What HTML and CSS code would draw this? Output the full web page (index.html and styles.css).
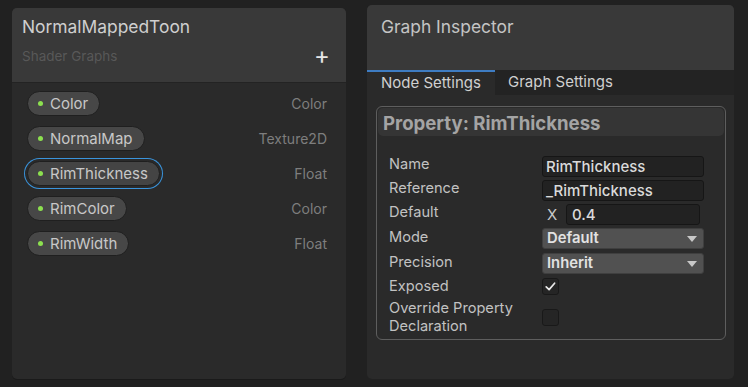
FILE: index.html
```html
<!DOCTYPE html>
<html>
<head>
<meta charset="utf-8">
<link rel="stylesheet" href="styles.css">
</head>
<body>
<div class="stage">
  <section class="blackboard">
    <header class="bb-header">
      <div class="bb-title">NormalMappedToon</div>
      <div class="bb-sub">
        <span>Shader Graphs</span>
        <span class="plus">+</span>
      </div>
    </header>
    <ul class="props">
      <li class="prop"><span class="pill"><i class="dot"></i>Color</span><span class="type">Color</span></li>
      <li class="prop"><span class="pill"><i class="dot"></i>NormalMap</span><span class="type">Texture2D</span></li>
      <li class="prop"><span class="pill selected"><i class="dot"></i>RimThickness</span><span class="type">Float</span></li>
      <li class="prop"><span class="pill"><i class="dot"></i>RimColor</span><span class="type">Color</span></li>
      <li class="prop"><span class="pill"><i class="dot"></i>RimWidth</span><span class="type">Float</span></li>
    </ul>
  </section>

  <section class="inspector">
    <header class="in-header">Graph Inspector</header>
    <nav class="tabs">
      <span class="tab active">Node Settings</span>
      <span class="tab">Graph Settings</span>
    </nav>
    <div class="in-body">
      <div class="propbox">
        <div class="propbox-title">Property: RimThickness</div>
        <div class="rows">
          <div class="row r24"><span class="lbl">Name</span><span class="field">RimThickness</span></div>
          <div class="row r24"><span class="lbl">Reference</span><span class="field">_RimThickness</span></div>
          <div class="row r24"><span class="lbl">Default</span><span class="vec"><span class="x">X</span><span class="field num">0.4</span></span></div>
          <div class="row r25"><span class="lbl">Mode</span><span class="dropdown">Default<i class="tri"></i></span></div>
          <div class="row r25"><span class="lbl">Precision</span><span class="dropdown">Inherit<i class="tri"></i></span></div>
          <div class="row r24"><span class="lbl">Exposed</span><span class="check on"><svg viewBox="0 0 17 17" width="17" height="17"><path d="M4.2 8.8 L7.1 11.6 L12.6 5.2" fill="none" stroke="#e8e8e8" stroke-width="1.7" stroke-linecap="round" stroke-linejoin="round"/></svg></span></div>
          <div class="row rtall"><span class="lbl">Override Property<br>Declaration</span><span class="check"></span></div>
        </div>
      </div>
    </div>
  </section>
</div>
</body>
</html>
```

FILE: styles.css
```css
* { box-sizing: border-box; margin: 0; padding: 0; }
html, body { width: 748px; height: 387px; overflow: hidden; }
body {
  background: #212121;
  font-family: Inter, "Noto Sans", "Liberation Sans", sans-serif;
  color: #c4c4c4;
}
.stage {
  display: flex;
  align-items: flex-start;
  padding-left: 12px;
}

/* Blackboard */
.blackboard {
  width: 334px;
  height: 371px;
  margin-top: 8px;
  background: #2a2a2a;
  border-radius: 5px;
  overflow: hidden;
  box-shadow: 0 1px 0 #1a1a1a;
}
.bb-header {
  height: 75px;
  background: #393939;
  border-bottom: 1px solid #232323;
  padding: 9px 16px 0 10px;
}
.bb-title {
  font-size: 17.4px;
  line-height: 20px;
  color: #cfcfcf;
}
.bb-sub {
  display: flex;
  justify-content: space-between;
  align-items: center;
  margin-top: 10px;
  font-size: 13.5px;
  color: #585858;
}
.plus {
  font-size: 24px;
  line-height: 18px;
  color: #e6e6e6;
  font-weight: 400;
}
.props {
  list-style: none;
  padding: 8px 19px 0 15px;
}
.prop {
  height: 35px;
  display: flex;
  justify-content: space-between;
  align-items: flex-start;
}
.pill {
  height: 25px;
  display: inline-flex;
  align-items: center;
  padding: 0 11px 0 10px;
  background: #474747;
  border: 1px solid #1f1f1f;
  border-radius: 13px;
  font-size: 15px;
  color: #c8c8c8;
}
.pill.selected {
  box-shadow: 0 0 0 2px #2a2a2a, 0 0 0 3px #3a94dc;
  background: #444444;
}
.dot {
  width: 5px;
  height: 5px;
  border-radius: 50%;
  background: #8ce04f;
  margin-right: 7px;
}
.type {
  font-size: 14px;
  line-height: 25px;
  color: #7e7e7e;
}

/* Inspector */
.inspector {
  width: 367px;
  height: 374px;
  margin-top: 5px;
  margin-left: 21px;
  background: #2a2a2a;
  border-radius: 5px;
  overflow: hidden;
  display: flex;
  flex-direction: column;
}
.in-header {
  height: 65px;
  background: #393939;
  padding: 12px 0 0 14px;
  font-size: 17.4px;
  line-height: 20px;
  color: #c4c4c4;
}
.tabs {
  height: 25px;
  display: flex;
  background: #232323;
}
.tab {
  font-size: 15px;
  line-height: 24px;
  color: #d0d0d0;
  padding-left: 13px;
}
.tab.active {
  width: 128px;
  padding-left: 14px;
  background: #2a2a2a;
  border-top: 2px solid #3e7cc2;
  line-height: 22px;
}
.in-body {
  padding: 11px 8px 0 9px;
}
.propbox {
  height: 234px;
  border: 1px solid #5e5e5e;
  border-radius: 6px;
  padding: 1px;
}
.propbox-title {
  height: 28px;
  background: #353535;
  border-radius: 5px;
  padding: 2px 0 0 5px;
  font-size: 18.6px;
  line-height: 26px;
  font-weight: 700;
  color: #a4a4a4;
}
.rows {
  padding: 18px 0 0 12px;
}
.row {
  display: flex;
  align-items: center;
}
.r24 { height: 24px; }
.r25 { height: 25px; }
.rtall { height: 38px; align-items: center; }
.lbl {
  width: 152px;
  font-size: 14.6px;
  line-height: 18px;
  color: #c2c2c2;
  position: relative;
  top: -2px;
  left: -1px;
}
.field {
  width: 162px;
  height: 21px;
  background: #222222;
  border: 1px solid #161616;
  border-radius: 3px;
  padding-left: 3px;
  font-size: 15px;
  line-height: 19px;
  font-weight: 500;
  color: #dadada;
}
.vec {
  display: flex;
  align-items: center;
}
.x {
  width: 24px;
  padding-left: 5px;
  font-size: 15px;
  color: #c8c8c8;
}
.field.num { width: 134px; padding-left: 5px; }
.dropdown {
  width: 162px;
  height: 21px;
  background: #515151;
  border: 1px solid #3f3f3f;
  border-radius: 3px;
  padding-left: 4px;
  font-size: 14.8px;
  line-height: 19px;
  font-weight: 600;
  color: #e2e2e2;
  display: flex;
  justify-content: space-between;
  align-items: center;
  padding-right: 6px;
}
.tri {
  width: 0;
  height: 0;
  border-left: 5px solid transparent;
  border-right: 5px solid transparent;
  border-top: 6px solid #c8c8c8;
}
.check {
  width: 17px;
  height: 17px;
  background: #252525;
  border: 1px solid #191919;
  border-radius: 3px;
  display: flex;
  align-items: center;
  justify-content: center;
  position: relative;
  top: -2px;
}
.check svg { display: block; margin: -1px; }
```
